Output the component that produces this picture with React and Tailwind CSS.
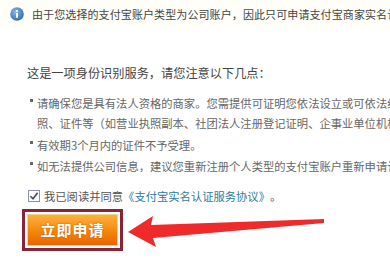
import React from "react";

const font = { fontFamily: '"Noto Sans CJK SC", "Noto Sans", sans-serif' };

function Bullet({ children }) {
  return (
    <div className="flex">
      <span className="w-[8px] shrink-0 relative">
        <span className="absolute left-[1px] top-[6px] w-[3px] h-[3px] bg-[#666]" />
      </span>
      <div className="whitespace-nowrap">{children}</div>
    </div>
  );
}

export default function App() {
  return (
    <div
      className="w-[390px] h-[263px] overflow-hidden bg-white relative text-[#555]"
      style={font}
    >
      {/* info bar */}
      <div className="h-[28px] bg-[#fffef8] flex items-center pl-[10px] gap-[8px] whitespace-nowrap">
        <svg width="14" height="14" viewBox="0 0 14 14" className="shrink-0">
          <defs>
            <radialGradient id="ig" cx="40%" cy="35%" r="70%">
              <stop offset="0%" stopColor="#8fb8e4" />
              <stop offset="100%" stopColor="#2f68b0" />
            </radialGradient>
          </defs>
          <circle cx="7" cy="7" r="6.8" fill="url(#ig)" />
          <circle cx="7" cy="4" r="1.1" fill="#fff" />
          <rect x="6" y="5.8" width="2" height="5" rx="0.6" fill="#fff" />
        </svg>
        <span className="text-[11px] text-[#444] tracking-[0.1px]">
          由于您选择的支付宝账户类型为公司账户，因此只可申请支付宝商家实名认证。
        </span>
      </div>

      <div className="pl-[27px] pt-[35px]">
        <div className="text-[12.2px] leading-[20px] text-[#444] whitespace-nowrap">
          这是一项身份识别服务，请您注意以下几点：
        </div>

        <div className="mt-[10px] pl-[2px] text-[11.3px] leading-[20px] text-[#666] flex flex-col gap-[1.5px]">
          <Bullet>
            请确保您是具有法人资格的商家。您需提供可证明您依法设立或可依法经营的
            <br />
            照、证件等（如营业执照副本、社团法人注册登记证明、企事业单位机构代码
          </Bullet>
          <Bullet>有效期3个月内的证件不予受理。</Bullet>
          <Bullet>如无法提供公司信息，建议您重新注册个人类型的支付宝账户重新申请认证。</Bullet>
        </div>

        <div className="mt-[10px] flex items-center text-[11.3px] leading-[20px] whitespace-nowrap">
          <span className="w-[12px] h-[12px] border border-[#8a94a6] bg-white flex items-center justify-center mr-[4px] ml-[1px]">
            <svg width="10" height="10" viewBox="0 0 10 10">
              <path d="M1.5 5.2 L4 7.8 L8.6 1.8" stroke="#3b4a66" strokeWidth="1.6" fill="none" />
            </svg>
          </span>
          <span className="text-[#555]">我已阅读并同意</span>
          <span className="text-[#2f7a9e]">《支付宝实名认证服务协议》</span>
          <span className="text-[#555]">。</span>
        </div>

        <div className="mt-[3px] ml-[-5px] w-[101px] h-[42px] border-[3px] border-[#8a2238] p-[2px]">
          <div className="w-full h-full border border-[#f3cf8a] bg-gradient-to-b from-[#fbb13a] via-[#f58a0c] to-[#e86500] flex items-center justify-center">
            <span className="text-white text-[15px] font-bold tracking-[1px] [text-shadow:0_0_2px_#c05a00]">
              立即申请
            </span>
          </div>
        </div>
      </div>

      {/* red arrow */}
      <svg
        className="absolute left-0 top-0"
        width="390"
        height="263"
        viewBox="0 0 390 263"
      >
        <polygon
          points="128,232 153,216 151,225 324,219 324,223 153,238 156,247"
          fill="#ee2a2a"
        />
      </svg>
    </div>
  );
}
